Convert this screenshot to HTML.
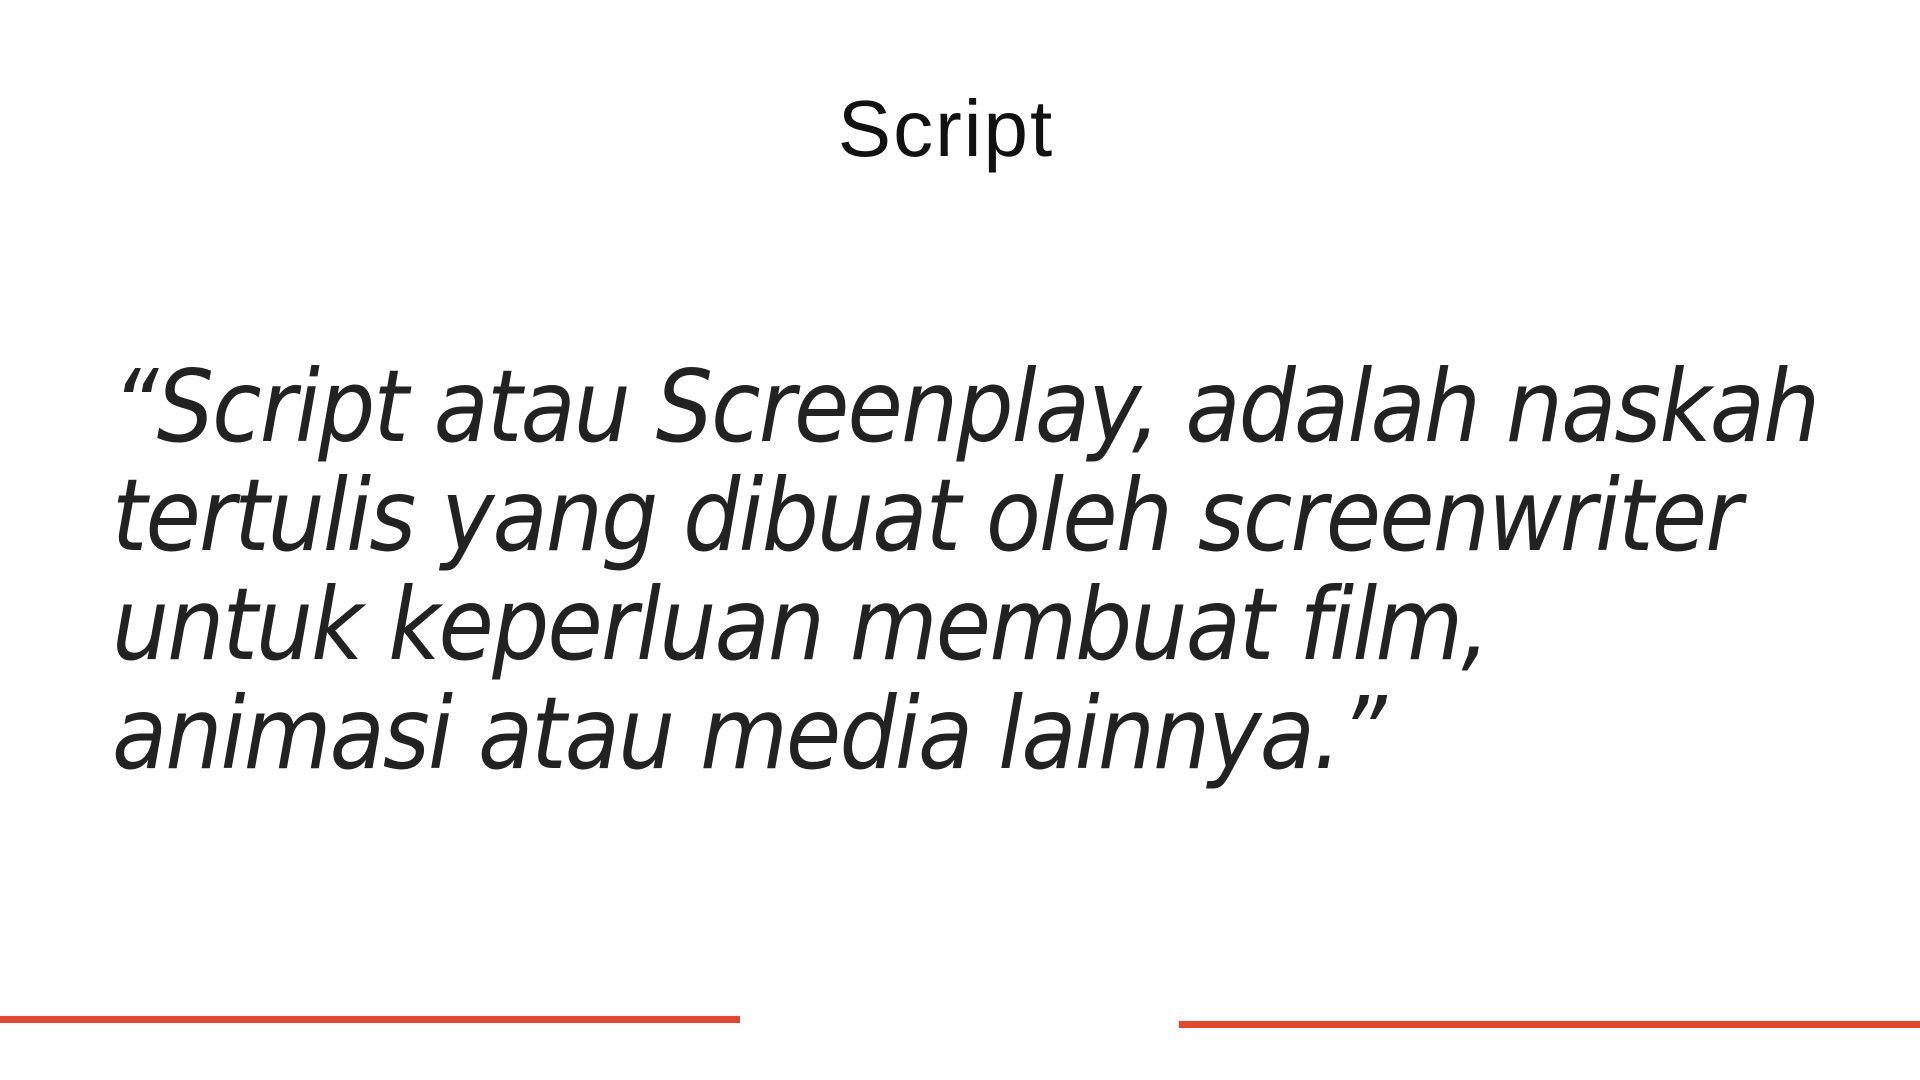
<!DOCTYPE html>
<html><head><meta charset="utf-8"><style>
html,body{margin:0;padding:0;width:1920px;height:1080px;background:#fff;overflow:hidden}
.t{position:absolute;left:0;width:1892px;text-align:center;top:89px;font-family:"Liberation Sans",sans-serif;font-size:80px;letter-spacing:2px;color:#111;font-weight:normal;line-height:1}
.q{position:absolute;left:112px;top:352px;font-family:"DejaVu Sans Condensed","DejaVu Sans",sans-serif;font-style:italic;font-stretch:condensed;font-size:100px;line-height:109px;color:#222;letter-spacing:-1.8px;white-space:nowrap}
.r1{position:absolute;left:0;top:1016px;width:740px;height:7px;background:#e8442e}
.r2{position:absolute;left:1179px;top:1021px;width:741px;height:7px;background:#e8442e}
</style></head><body>
<div class="t">Script</div>
<div class="q">“Script atau Screenplay, adalah naskah<br>tertulis yang dibuat oleh screenwriter<br>untuk keperluan membuat film,<br>animasi atau media lainnya.”</div>
<div class="r1"></div><div class="r2"></div>
</body></html>
